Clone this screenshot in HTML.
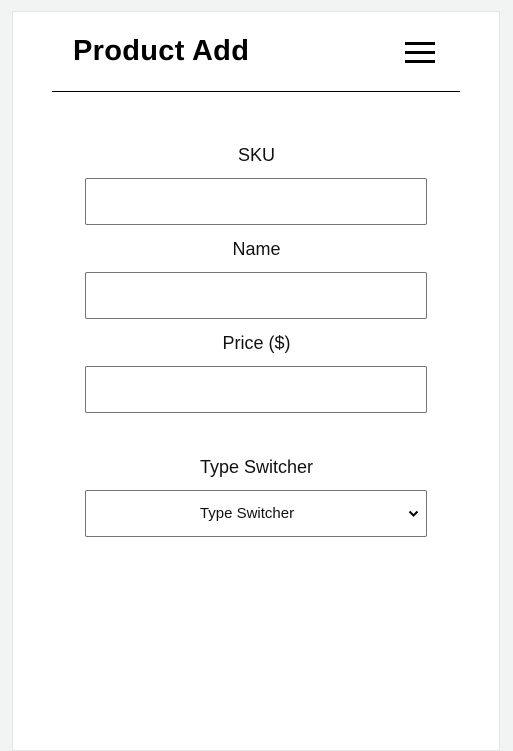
<!DOCTYPE html>
<html><head><style>
body{margin:0;background:#f2f4f3;width:513px;height:742px;overflow:hidden;font-family:"Liberation Sans",sans-serif;}
.card{position:absolute;left:12px;top:11px;width:488px;height:740px;background:#fff;border:1px solid #e4e6e5;box-sizing:border-box;}
.t{position:absolute;left:73px;top:33px;font-size:29px;font-weight:bold;color:#000;line-height:36px;letter-spacing:0.3px;}
.hb{position:absolute;left:405px;width:30px;height:3px;background:#000;}
.hr{position:absolute;left:52px;top:91px;width:408px;height:1px;background:#000;}
.l{position:absolute;left:0;width:513px;text-align:center;font-size:18px;color:#111;line-height:22px;}
.i{position:absolute;left:85px;width:342px;height:47px;border:1px solid #767676;border-radius:2px;box-sizing:border-box;}
.s{font-size:15px;text-align:center;line-height:45px;color:#111;}
</style></head><body>
<div class="card"></div>
<div class="t">Product Add</div>
<div class="hb" style="top:42px"></div><div class="hb" style="top:51px"></div><div class="hb" style="top:60px"></div>
<div class="hr"></div>
<div class="l" style="top:144px">SKU</div><div class="i" style="top:178px"></div>
<div class="l" style="top:238px">Name</div><div class="i" style="top:272px"></div>
<div class="l" style="top:332px">Price ($)</div><div class="i" style="top:366px"></div>
<div class="l" style="top:456px">Type Switcher</div>
<div class="i s" style="top:490px"><span style="position:relative;left:-9px">Type Switcher</span>
<svg style="position:absolute;right:7px;top:19px" width="11" height="8" viewBox="0 0 11 8"><path d="M1.5 1.5L5.5 5.5L9.5 1.5" fill="none" stroke="#000" stroke-width="2"/></svg></div>
</body></html>
